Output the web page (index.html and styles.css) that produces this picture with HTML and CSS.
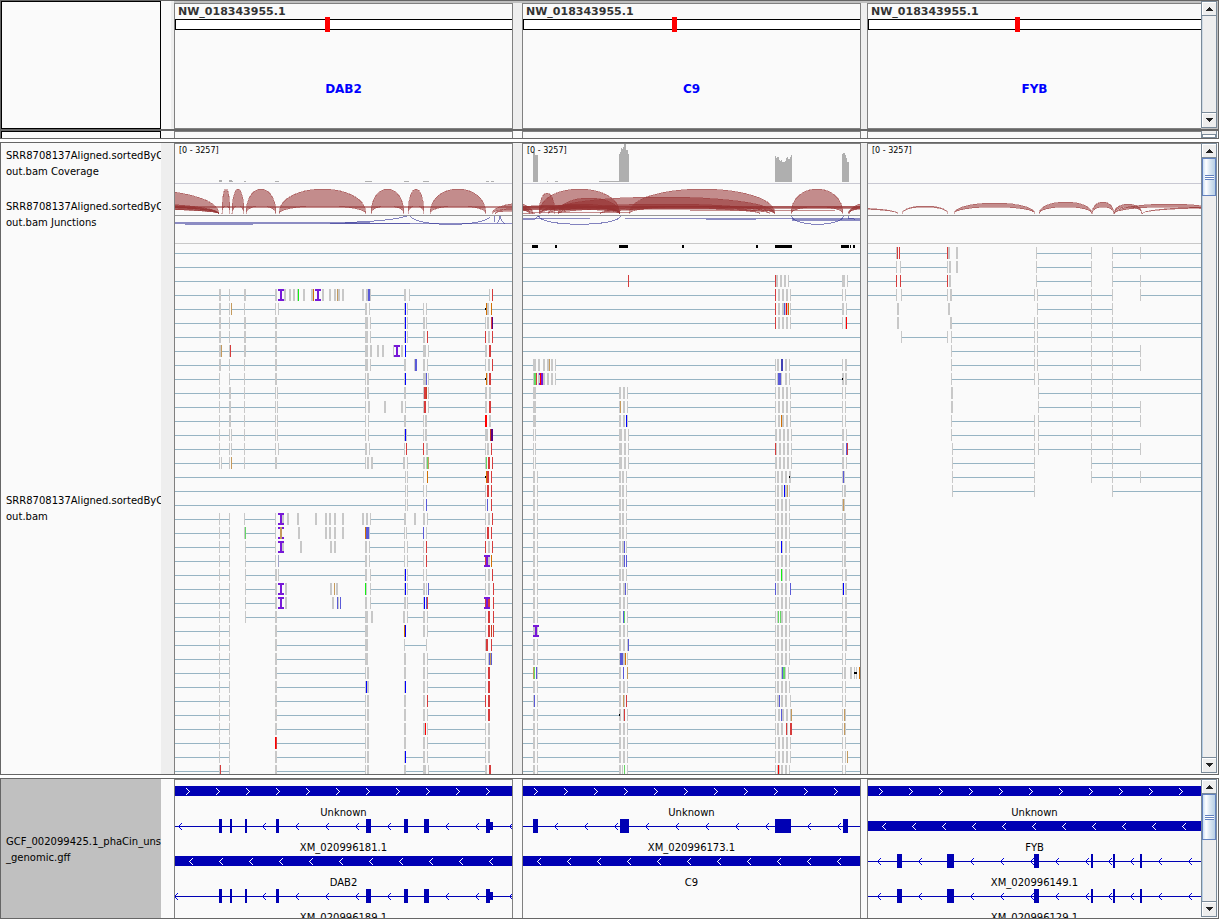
FILE: index.html
```html
<!DOCTYPE html>
<html lang="en">
<head>
<meta charset="utf-8">
<title>Genome viewer</title>
<link rel="stylesheet" href="styles.css">
</head>
<body>
<main class="viewer">
  <section class="row head">
    <div class="name boxed"></div>
    <div class="gutter first"></div>
    <div class="panel">
      <h2 class="chrom">NW_018343955.1</h2>
      <div class="ideogram"><span class="marker" style="left:44.2%"></span></div>
      <p class="locus">DAB2</p>
    </div>
    <div class="gutter"></div>
    <div class="panel">
      <h2 class="chrom">NW_018343955.1</h2>
      <div class="ideogram"><span class="marker" style="left:43.9%"></span></div>
      <p class="locus">C9</p>
    </div>
    <div class="gutter"></div>
    <div class="panel last">
      <h2 class="chrom">NW_018343955.1</h2>
      <div class="ideogram"><span class="marker" style="left:43.9%"></span></div>
      <p class="locus">FYB</p>
    </div>
    <div class="scroll">
      <button class="step" aria-label="Scroll up"><svg width="7" height="4"><path d="M3 0h1v1h1v1h1v1h1v1H0V3h1V2h1V1h1z"/></svg></button>
      <div class="track"></div>
      <button class="step down" aria-label="Scroll down"><svg width="7" height="4"><path d="M0 0h7v1H6v1H5v1H4v1H3V3H2V2H1V1H0z"/></svg></button>
    </div>
  </section>

  <section class="row sliver">
    <div class="name boxed"></div>
    <div class="gutter"></div>
    <div class="panel"></div>
    <div class="gutter"></div>
    <div class="panel"></div>
    <div class="gutter"></div>
    <div class="panel last"></div>
    <div class="scroll"><div class="ridge"></div></div>
  </section>

  <section class="row data">
    <div class="name">
      <div class="label coverage">SRR8708137Aligned.sortedByCo<br>out.bam Coverage</div>
      <div class="label junctions">SRR8708137Aligned.sortedByCo<br>out.bam Junctions</div>
      <div class="label reads">SRR8708137Aligned.sortedByCo<br>out.bam</div>
    </div>
    <div class="gutter"></div>
    <div class="panel"><svg class="plot" id="reads-0"></svg></div>
    <div class="gutter"></div>
    <div class="panel"><svg class="plot" id="reads-1"></svg></div>
    <div class="gutter"></div>
    <div class="panel last"><svg class="plot" id="reads-2"></svg></div>
    <div class="scroll">
      <button class="step" aria-label="Scroll up"><svg width="7" height="4"><path d="M3 0h1v1h1v1h1v1h1v1H0V3h1V2h1V1h1z"/></svg></button>
      <div class="track"><div class="thumb"><i class="grip"></i></div></div>
      <button class="step down" aria-label="Scroll down"><svg width="7" height="4"><path d="M0 0h7v1H6v1H5v1H4v1H3V3H2V2H1V1H0z"/></svg></button>
    </div>
  </section>

  <section class="row features">
    <div class="name">
      <div class="label reads">GCF_002099425.1_phaCin_unsw<br>_genomic.gff</div>
    </div>
    <div class="gutter"></div>
    <div class="panel"><svg class="plot" id="genes-0"></svg></div>
    <div class="gutter"></div>
    <div class="panel"><svg class="plot" id="genes-1"></svg></div>
    <div class="gutter"></div>
    <div class="panel last"><svg class="plot" id="genes-2"></svg></div>
    <div class="scroll">
      <button class="step" aria-label="Scroll up"><svg width="7" height="4"><path d="M3 0h1v1h1v1h1v1h1v1H0V3h1V2h1V1h1z"/></svg></button>
      <div class="track"><div class="thumb tall"><i class="grip"></i></div></div>
      <button class="step down" aria-label="Scroll down"><svg width="7" height="4"><path d="M0 0h7v1H6v1H5v1H4v1H3V3H2V2H1V1H0z"/></svg></button>
    </div>
  </section>
</main>
<script src="tracks.js"></script>
</body>
</html>
```
FILE: styles.css
```css
* { box-sizing: border-box; }

body {
  margin: 0;
  background: #fff;
  color: #000;
  font-family: "DejaVu Sans", sans-serif;
  font-size: 10px;
}

.viewer {
  display: flex;
  flex-direction: column;
  height: 100vh;
}

.row {
  display: grid;
  grid-template-columns: 160px 13px 339fr 9px 339fr 6px 334fr 17px;
  grid-template-rows: minmax(0, 1fr);
  flex: none;
  border: 1px solid #666;
  border-top-width: 0;
  background: #fafafa;
  overflow: hidden;
}

.head { height: 131px; border-top-width: 1px; border-bottom-width: 2px; background: #c0c0c0; }
.sliver { height: 8px; margin-bottom: 3px; }
.data { flex: 1; min-height: 0; border-top-width: 1px; }
.features { height: 141px; margin-top: 3px; border-top-width: 1px; }

.name {
  display: flex;
  flex-direction: column;
  overflow: hidden;
  background: #fafafa;
}
.boxed { border: 1px solid #000; }
.sliver .boxed { border-bottom: 0; }
.features .name { background: #c0c0c0; padding-top: 3px; }

.label {
  display: grid;
  align-content: center;
  padding-left: 5px;
  line-height: 16px;
  white-space: nowrap;
}
.coverage { height: 42px; }
.junctions { height: 59px; }
.reads { flex: 1; }

.gutter { background: #eee; }
.head .gutter { margin-top: 2px; }
.head .first { margin-top: 0; border-left: 10px solid #fafafa; }
.sliver .gutter, .features .gutter { background: #fafafa; }

.panel {
  min-width: 0;
  overflow: hidden;
  border: 1px solid #808080;
  border-bottom: 0;
  background: #fafafa;
}
.panel.last { border-right: 0; }
.head .panel { margin-top: 2px; border-bottom: 1px solid #808080; }

.plot { display: block; width: 100%; height: 100%; }
.plot text { font-size: 10px; }
.plot .range { font-size: 8px; }

.chrom {
  margin: 0;
  padding-left: 3px;
  height: 15px;
  line-height: 15px;
  font-size: 11px;
  color: #333;
}
.ideogram {
  position: relative;
  height: 11px;
  border: 1px solid #000;
  border-right: 0;
  background: #fff;
}
.marker {
  position: absolute;
  top: -3px;
  width: 5px;
  height: 15px;
  background: #f00;
}
.locus {
  margin: 51px 0 0;
  line-height: 16px;
  font-size: 12px;
  font-weight: bold;
  text-align: center;
  color: #00f;
}

.scroll {
  display: flex;
  flex-direction: column;
  margin-right: 1px;
  border: 1px solid #7a8a99;
  border-bottom: 0;
  background: #eee;
  overflow: hidden;
}
.head .scroll { margin-bottom: 1px; border-bottom: 1px solid #7a8a99; }
.data .scroll, .features .scroll { margin-bottom: 1px; border-bottom: 1px solid #7a8a99; }
.sliver .scroll { padding-top: 3px; border-top: 0; }
.ridge { height: 4px; border: 1px solid #7a8a99; background: #fff; }
.step {
  flex: none;
  display: grid;
  place-items: center;
  height: 14px;
  padding: 0;
  border: 0;
  border-bottom: 1px solid #7a8a99;
  background: #eee;
  box-shadow: inset 1px 1px #fff;
}
.step svg { display: block; fill: #222; shape-rendering: crispEdges; }
.down { height: 15px; border-top: 1px solid #7a8a99; border-bottom: 0; }
.track { flex: 1; min-height: 0; border-left: 1px solid #b8cfe5; }
.head .track { border-left-color: #d0dae4; }
.thumb {
  display: grid;
  place-items: center;
  height: 38px;
  margin-left: -1px;
  border: 1px solid #6382bf;
  background: linear-gradient(90deg, #c8ddf2, #fff 25%, #dce8f3 55%, #b8cfe5);
}
.tall { height: 46px; }
.grip {
  width: 9px;
  height: 5px;
  background: repeating-linear-gradient(#6382bf 0 1px, #fff 1px 2px);
}
```
FILE: tracks.js
```js
const NS = "http://www.w3.org/2000/svg";
const RED = "#963232", BLUE = "#323296";
const COLORS = {
  g: "#c8c8c8", r: "#d63c3c", R: "#ff0000", b: "#5a5ad8", B: "#0000ff",
  n: "#64d764", N: "#14f014", t: "#c49a5c", O: "#d17105", D: "#c83c1e",
  d: "#5a0082", e: "#4040b4", v: "#a0a0c8"
};

function add(parent, tag, attrs, text) {
  const el = document.createElementNS(NS, tag);
  for (const k in attrs) el.setAttribute(k, attrs[k]);
  if (text) el.textContent = text;
  parent.appendChild(el);
  return el;
}
function rect(g, x, y, w, h, fill) {
  return add(g, "rect", { x, y, width: w, height: h, fill });
}

// Each token is start, colour key, width; "!" leaves the next gap unlinked.
const HEAD = "54 64 ! ";
const P1 = ["", "", "",
  "54g2 64 79g2 110g2 113p6 119g2 124g2 128g2 132 133N 138g2 146g2 148O 150p6 157g2 164g2 169g2 172t 173g2 177g2 ! 197g2 201g2 203b2 205 239g2 244 324 327r",
  "54g2 64 66t 79 110 113 200g2 204 239 240B 242 258 261 320k 321O 322g2 326O",
  "54g2 64 79g2 110g2 200g3 205 239 240B 242 258g2 261 320 322g2 326r 327d",
  "54g2 64 79g2 110g2 200g3 205 239 240B 242 258g2 262r 320r 323g2 327r",
  "54g2 56t 64 65r 79g2 110g2 200g3 205g2 ! 212g2 217g2 ! 228 229p6 236g2 240B 258g3 263 320g2 324r2",
  "54g2 64 79 110g2 200g3 205 239g2 ! 249 250b2 258g2 262 320 323g2 327r",
  "54 ! 64 79 110g2 200 202g2 239 240B 258g3 261b 263 320k 321O 322 324r2",
  "54 64g2 79 110 112 200 202g2 239g2 258 259r2 261D 263 320g2 324g2",
  "54 64g2 79 110 112 200 203g2 ! 219g2 ! 236g2 240 258 259r2 263 320g2 324r2",
  "54 64g2 79 110 112 200 203 239g2 258 260g2 320R2 324g2",
  "54 64 66 79 110 112 200 203 239 240B 241 258 260g2 320g3 325D 326d2",
  "54 64 66 79 110 113 200g2 204 239 241r 258r 261g2 320 322g2 326r",
  "54 56 64 66t 79 110g2 200 202g2 206g2 238g2 242 258g2 261 262n 263t 320 321n 323r2 327r",
  "240 242 258 262O 320k 321O 322r2 326r",
  "240 242 258 261 320 322r2 326r",
  "240 242 258 261b 320 322b 326r",
  HEAD + "79 110 117g2 113p6 122g2 ! 132g2 ! 150g2 ! 160g2 164g2 169g2 177g2 ! 197g2 201g2 205 239g2 ! 249g2 ! 258g2 262 320 323g2 327r",
  HEAD + "79 80n 110 113p6 115t2 ! 133g2 ! 160g2 164g2 169g2 177g2 ! 200O 201b3 204 239 241 258b 261 320 322r2 326r",
  HEAD + "80 110 117g2 113p6 ! 135g2 ! 165g2 169g2 ! 200g2 204 239 242 258 261r 320r 323g2 327r",
  HEAD + "80 110 113v 200g2 204 239 242 258 261r 320r 323g2 319p6 326O",
  HEAD + "80 110g2 113 200g2 205 239 240B 242 258 261 320 323g2 327r",
  HEAD + "80 110g2 113p6 120g2 ! 165g2 169t 171g2 ! 200N 201 205 239 240B 242 258g2 261 263b 320 323g2 328r",
  HEAD + "80 110g2 113p6 120g2 ! 167g2 172b 173 175b ! 200g2 205 239g2 242 258 259B 261b 262r 320r 323r2 319p6 328r",
  HEAD + "80 110g2 200g3 206g2 ! 238g2 242 258g2 262 320 323r2 328r",
  HEAD + "110g2 200g3 ! 239O 240B ! 258g2 262 320 323r2 326D 328r",
  HEAD + "110g2 200g3 ! 239 261 ! 320 321r2 326r",
  HEAD + "110g2 200g3 ! 239g2 ! 258g2 262 320 323 324b 325t 326b !",
  HEAD + "110g2 200 202g2 ! 239g2 ! 258g2 262 320 323r2 !",
  HEAD + "110g2 200 201B 202g2 ! 239 240B ! 258g2 262 320 323r2 !",
  HEAD + "110g2 200 202g2 ! 239g2 ! 258g2 262r 320r 323r2 !",
  HEAD + "110g2 200 202g2 ! 239g2 ! 258g2 262 320 323r2 !",
  HEAD + "110g2 200 202g2 ! 239g2 ! 258g2 260R 262 320 323g2 !",
  HEAD + "110R 111r 200 202g2 ! 239g2 ! 258g2 262 320 323g2 !",
  HEAD + "110g2 200 202g2 ! 239 240B 258g2 262 320 323g2 !",
  "54 55r 64 ! 110g2 200 202g2 ! 239g2 258g3 263 320g2 324r2 !"
];
const A = "18g2 22 ", M = "104g2 107g2 111 ", M2 = "104g2 108g2 112 ";
const C = "260 262g2 266g2 270g2 274 ", C2 = "260 263g2 267g2 271g2 275 ";
const C3 = "264g2 268g2 272g2 276 ";
const P2 = ["", "",
  "113r 260r 261g2 265g2 269g2 273 327g3 332",
  "260r 263g2 267g2 271g2 275 327 330",
  "260r 263g2 267g2 269b 270 271R 272 273O 275 327g2 331",
  "260r 263g2 267g2 271g2 275 327 330 331R",
  "", "",
  "18g3 23g2 28g2 32g2 34t 36g2 40 260 262g2 266e2 270g2 274 327 330g2",
  "18 19n2 21r 23g2 24p6 25R 28g2 32g2 36g2 40 260 262 263b3 266 270g2 274 327g2 327k 330g2",
  "18g3 " + M2 + C2 + "327 330",
  "18g3 104 105t 108g2 112 " + C2 + "327 330",
  "18g3 104g2 108g2 111B 112 260 263g2 266O 267g2 271g2 275 327 330",
  "18 20 104g3 109g2 113 260g2 " + C3 + "327g2 331",
  "18 20 104g3 109g2 113 260r 261 " + C3 + "327g2 331b 332r",
  "18 20 104g3 109g2 113 260g2 " + C3 + "327g2 331",
  A + M + "260 262g2 266g2 270g2 274g2 274k 327 328b 329",
  A + M + "260 262g2 266g2 269B 270g2 272t 274 327 329g2",
  A + M + C + "327 328t 329",
  A + M + C + "327 329g2",
  A + M + C + "327 329g2",
  A + "104g2 107g2 109b 111 260 262g2 266B 267 270g2 274 327 329g2",
  A + "104g2 107g2 109b 111b " + C + "327 329g2",
  A + M + "260 262g2 266N 267 270g2 274 327 330g2",
  A + "104g2 108g2 110b 112 260b 262g2 266g2 270g2 275b 327 328B 330g2",
  A + M2 + C + "327 330g2",
  A + "104g2 108b 109n 112 260 262 263n 265n 266g2 270g2 274 327 330g2",
  "18g3 22 18p6 " + M2 + C + "327 330g2",
  A + M2 + "113b " + C + "327 330g2",
  A + "104 105b3 108g2 110O 112 " + C + "327 330",
  "18t 19n 21b 22 104g2 108b 112t 260 262g2 266 267b 268n2 270 273 327 329g2 335g2 339 341 339k3 344O",
  A + M2 + C + "327 330",
  "18 19b 22 104g2 108t 109 111r 260 262g2 264b 266g2 270g2 275 327 330",
  A + "104g2 104k 108 109r 112 260 263g2 266b 267g2 271g2 275 276t 327 329t 330",
  A + M2 + "260 262g2 266g2 271r 272 275r2 327 329t 330",
  A + M2 + C2 + "327 330",
  A + M2 + C2 + "327 330 332t",
  A + "104g2 107 109n 112 260 262 263R 264 266g2 270g2 274 327 330"
];
const P3 = [
  "36 37r 39r 87r 88g2 96g2 ! 176 231 ! 252 280",
  "36 40 87 89g2 96g2 ! 176 231 ! 252",
  "36r 40r 87r 89g2 ! 176 231 ! 252 280",
  "36 41 87 90g2 174 177 231 252 ! 280",
  "! 37g2 ! 88g2 ! 177 231 252 !",
  "! 37g2 ! 90g2 174 177 231 252",
  "! 41 87 91 174 177 231 252",
  "! 91 174 177 231 252 280 !",
  "! 91 174 177 231 252 280 !",
  "! 91 174 178 231 252",
  "! 91g2 ! 178 231 252",
  "! 91g2 ! 178 231 252 280 !",
  "! 91 174 178 231 252 280 !",
  "! 91 174 178 231 252",
  "! 92 174 178 231 252 280 !",
  "! 92 174 ! 231 252",
  "! 92 174 ! 231 252 280",
  "! 92 174 ! 252"
];

function drawReads(g, rows, inset) {
  rows.forEach((row, i) => {
    const y = 103 + 14 * i;
    let end = 0, skip = false;
    const link = (a, b) => rect(g, a, y + 6, b - a, 1, "#97b4c3");
    for (const tok of row.split(" ").filter(Boolean)) {
      if (tok === "!") { skip = true; continue; }
      const [, n, c = "g", w = "1"] = tok.match(/^(\d+)([a-zA-Z])?(\d)?$/);
      const x = n - inset, width = +w;
      if (!skip && x - end >= 7) link(end, x);
      skip = false;
      if (c === "p") {
        rect(g, x, y, 6, 2, "#7718d8");
        rect(g, x, y + 10, 6, 2, "#7718d8");
        rect(g, x + 2, y, 2, 12, "#7718d8");
      } else if (c === "k") {
        rect(g, x, y + 5, width, 2, "#000");
      } else {
        rect(g, x, y, width, 12, COLORS[c]);
      }
      end = Math.max(end, x + width);
    }
    if (!skip) link(end, 3000);
  });
}

function arc(g, x1, x2, top, inner) {
  const base = 214;
  const h = (base - top) / 0.75, k = (base - inner) / 0.75;
  add(g, "path", {
    d: `M${x1} ${base}C${x1} ${base - h} ${x2} ${base - h} ${x2} ${base}C${x2} ${base - k} ${x1} ${base - k} ${x1} ${base}Z`,
    fill: RED, "fill-opacity": 0.55, stroke: RED, "stroke-opacity": 0.4
  });
}
function curve(g, d) {
  add(g, "path", { d, fill: "none", stroke: BLUE, "stroke-opacity": 0.6 });
}

const views = [
  { origin: 175, inset: 10, rows: P1,
    cover: [[219, 180, 3], [229, 180, 3], [231, 181, 2], [244, 181, 2], [275, 181, 4], [365, 181, 7], [404, 181, 5], [423, 181, 6], [486, 181, 3], [491, 181, 3]],
    arcs: [[40, 219, 189, 207], [20, 219, 203, 206], [-90, 219, 204, 208], [60, 219, 205, 209],
      [222, 230, 189, 206], [232, 244, 189, 206], [246, 276, 189, 206], [279, 366, 189, 206],
      [371, 404, 189, 206], [408, 424, 189, 206], [430, 486, 189, 206], [492, 560, 203, 208], [495, 530, 209, 211]],
    bands: [[175, 206, 3000, 2, RED], [175, 222, 195, 1, BLUE], [175, 223, 3000, 1, BLUE], [330, 223, 80, 1, BLUE], [185, 224, 68, 1, BLUE]],
    blue: ["M345 222.500Q392 221 407 216", "M410 216C416 227 482 227 490 217", "M494.500 216V222M497 223Q499 222 500 216Q501 222 505 223.500"],
    marks: [] },
  { origin: 523, inset: 8, rows: P2,
    cover: [[533, 152, 2], [535, 155, 3], [547, 181, 1], [555, 181, 3], [599, 181, 20], [619, 154, 1], [620, 152, 1], [621, 148, 1], [622, 149, 1], [623, 147, 1], [624, 144, 2], [626, 150, 2], [628, 154, 1],
      [775, 156, 1], [776, 158, 1], [777, 157, 2], [779, 160, 1], [780, 161, 1], [781, 160, 1], [782, 162, 3], [785, 161, 1], [786, 158, 1], [787, 157, 1], [788, 159, 2], [790, 157, 1], [791, 155, 1],
      [842, 154, 1], [843, 153, 2], [845, 155, 1], [846, 158, 1], [847, 162, 2]],
    arcs: [[430, 533, 198, 208], [480, 530, 204, 209], [539, 555, 193, 206], [539, 620, 189, 207],
      [558, 620, 198, 208], [548, 775, 197, 206], [558, 770, 204, 208], [629, 775, 189, 206],
      [540, 620, 204, 208], [500, 620, 205, 209], [600, 760, 206, 209], [791, 843, 189, 207], [849, 900, 202, 207], [848, 880, 206, 209]],
    bands: [[523, 206, 3000, 3, RED], [523, 206, 3000, 2, RED], [523, 209, 110, 1, RED], [530, 212, 100, 1, RED], [690, 210, 145, 1, RED], [523, 213, 12, 1, RED],
      [523, 218, 67, 1, BLUE], [523, 219, 12, 1, BLUE], [625, 218, 3000, 1, BLUE], [706, 219, 50, 1, BLUE], [792, 219, 3000, 2, BLUE]],
    blue: ["M535 219Q537 216 540 216", "M538.500 216C541 227 618 227 620.500 216", "M791.500 216C794 227 841 227 843.500 216", "M848.500 216V218H853L855 220"],
    marks: [[532, 6], [555, 2], [619, 9], [682, 2], [756, 2], [775, 17], [841, 8], [850, 1], [853, 2]] },
  { origin: 868, inset: 8, rows: P3, cover: [], marks: [], bands: [],
    arcs: [[800, 898, 208, 209], [902, 948, 206, 207], [954, 1035, 203, 207], [1039, 1092, 202, 207],
      [1092, 1114, 202, 207], [1114, 1142, 204, 207], [1114, 1224, 204, 207], [1142, 1300, 207, 208]],
    blue: [] }
];

views.forEach((v, i) => {
  const svg = document.getElementById("reads-" + i);
  const g = add(svg, "g", { transform: `translate(${-v.origin} -144)`, "shape-rendering": "crispEdges" });
  v.cover.forEach(([x, y, w]) => rect(g, x, y, w, 182 - y, "#afafaf"));
  rect(g, v.origin, 183, 3000, 1, "#c8c8d2");
  v.arcs.forEach(a => arc(g, ...a));
  v.bands.forEach(b => rect(g, ...b).setAttribute("fill-opacity", 0.55));
  rect(g, v.origin, 215, 3000, 1, "#969696");
  v.blue.forEach(d => curve(g, d));
  rect(g, v.origin, 243, 3000, 1, "#c8c8c8");
  v.marks.forEach(([x, w]) => rect(g, x, 245, w, 3, "#000"));
  add(g, "text", { x: v.origin + 4, y: 153, class: "range" }, "[0 - 3257]");
  drawReads(add(svg, "g", { "shape-rendering": "crispEdges" }), v.rows, v.inset);
});

const NAVY = "#0000b4";
const ex1 = [[219, 3], [230, 2], [245, 2], [276, 3], [366, 5], [404, 4], [424, 5], [486, 4], [490, 3, 1]];
const ex3 = [[897, 5], [947, 7], [1034, 5], [1091, 2], [1113, 2], [1140, 2]];
const tips3 = [877, 918, 970, 1000, 1030, 1055, 1085, 1108, 1130, 1158, 1188];
const genes = [
  [175, { bar: 1, at: 186, name: "Unknown" },
    { exons: ex1, tips: [178, 262, 295, 325, 355, 387, 445, 475, 509], name: "XM_020996181.1" },
    { bar: -1, at: 189, name: "DAB2" },
    { exons: ex1, tips: [174, 262, 295, 325, 355, 387, 445, 475, 509], name: "XM_020996189.1" }],
  [523, { bar: 1, at: 534, name: "Unknown" },
    { exons: [[533, 5], [620, 9], [775, 16], [843, 5]], tips: [554, 584, 614, 645, 675, 705, 735, 765, 807, 837], name: "XM_020996173.1" },
    { bar: -1, at: 537, name: "C9" }],
  [868, { bar: 1, at: 879, name: "Unknown" },
    { bar: -1, at: 882, name: "FYB" },
    { exons: ex3, tips: tips3, name: "XM_020996149.1" },
    { exons: ex3, tips: tips3, name: "XM_020996129.1" }]
];

genes.forEach(([origin, ...rows], i) => {
  const svg = document.getElementById("genes-" + i);
  rows.forEach((row, r) => {
    const g = add(svg, "g", { transform: `translate(${-origin} ${6 + 35 * r})`, "shape-rendering": "crispEdges" });
    const chevron = (x, dir, color) => {
      for (let s = -3; s <= 3; s++) rect(g, dir < 0 ? x + Math.abs(s) : x + 3 - Math.abs(s), 5 + s, 1, 1, color);
    };
    if (row.bar) {
      rect(g, origin, 0, 3000, 10, NAVY);
      for (let n = 0; n < 11; n++) chevron(row.at + 30 * n, row.bar, "#fff");
    } else {
      rect(g, origin, 5, 3000, 1, NAVY);
      row.tips.forEach(x => chevron(x, -1, "#0000dc"));
      row.exons.forEach(([x, w, small]) => rect(g, x, small ? 1 : -2, w, small ? 8 : 14, NAVY));
    }
    add(svg, "text", { x: "50%", y: 36 + 35 * r, "text-anchor": "middle" }, row.name);
  });
});
```
